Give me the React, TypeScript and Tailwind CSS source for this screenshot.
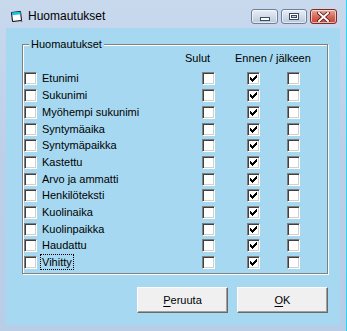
import React from "react";

const rows = [
  { label: "Etunimi", h: "h-[17px]" },
  { label: "Sukunimi", h: "h-[17px]" },
  { label: "Myöhempi sukunimi", h: "h-[17px]" },
  { label: "Syntymäaika", h: "h-[16px]" },
  { label: "Syntymäpaikka", h: "h-[17px]" },
  { label: "Kastettu", h: "h-[17px]" },
  { label: "Arvo ja ammatti", h: "h-[16px]" },
  { label: "Henkilöteksti", h: "h-[17px]" },
  { label: "Kuolinaika", h: "h-[17px]" },
  { label: "Kuolinpaikka", h: "h-[16px]" },
  { label: "Haudattu", h: "h-[17px]" },
  { label: "Vihitty", h: "h-[17px]", focused: true },
];

const CheckBox = ({ checked }: { checked?: boolean }) => (
  <div className="w-[13px] h-[13px] shrink-0 flex items-center justify-center bg-white border border-t-[#808080] border-l-[#808080] border-r-white border-b-white shadow-[inset_1px_1px_0_#404040,inset_-1px_-1px_0_#d4d0c8]">
    {checked && (
      <svg width="7" height="7" viewBox="0 0 7 7" shapeRendering="crispEdges">
        <path
          d="M0 2h1v3h-1z M1 3h1v3h-1z M2 4h1v3h-1z M3 3h1v3h-1z M4 2h1v3h-1z M5 1h1v3h-1z M6 0h1v3h-1z"
          fill="#000"
        />
      </svg>
    )}
  </div>
);

const CaptionButton = ({ kind }: { kind: "min" | "max" | "close" }) => {
  const base =
    kind === "close"
      ? "bg-gradient-to-b from-[#e9a99b] via-[#d46a5a] to-[#c2453a] border-[#7d2a22]"
      : "bg-gradient-to-b from-[#e8eef6] via-[#d2dcea] to-[#b9c8dc] border-[#6f7f97]";
  return (
    <div className={`h-[15px] ${kind === "max" ? "w-[26px]" : "w-[27px]"} rounded-[3px] border flex items-center justify-center shadow-[inset_0_0_0_1px_rgba(255,255,255,0.6)] ${base}`}>
      {kind === "min" && (
        <div className="w-[10px] h-[4px] mt-[4px] bg-white border border-[#3c4a5e]" />
      )}
      {kind === "max" && (
        <div className="w-[10px] h-[7px] border border-[#3c4a5e] bg-white flex items-center justify-center">
          <div className="w-[6px] h-[3px] bg-[#c6d3e4] border border-[#3c4a5e]" />
        </div>
      )}
      {kind === "close" && (
        <svg width="13" height="10" viewBox="0 0 13 10">
          <path d="M2 1 L11 9 M11 1 L2 9" stroke="#5b1b14" strokeWidth="3.6" strokeLinecap="square" />
          <path d="M2 1 L11 9 M11 1 L2 9" stroke="#fff" strokeWidth="2" strokeLinecap="square" />
        </svg>
      )}
    </div>
  );
};

const PushButton = ({ accel, rest }: { accel: string; rest: string }) => (
  <button className="w-[91px] h-[26px] flex items-center justify-center bg-[#f0f0f0] text-[11px] text-black border border-t-white border-l-white border-r-[#696969] border-b-[#696969] shadow-[inset_-1px_-1px_0_#a0a0a0]">
    <span>
      <span className="underline underline-offset-2">{accel}</span>
      {rest}
    </span>
  </button>
);

export default function App() {
  return (
    <div
      className="w-[347px] h-[331px] flex flex-col bg-gradient-to-b from-[#c8d9ee] via-[#bccfe8] to-[#b8cde8] border-r border-[#2ad6f2] text-black"
      style={{ fontFamily: '"Liberation Sans", Arial, sans-serif' }}
    >
      {/* Title bar */}
      <div className="h-[28px] shrink-0 flex items-start pl-[10px] pr-[9px]">
        <svg width="14" height="13" viewBox="0 0 14 13" className="mt-[10px]">
          <path d="M1.5 2.5 L10.5 1.5 L11.5 10.5 L2.5 11.5 Z" fill="#fff" stroke="#000" />
          <path d="M1.8 2.6 L10.4 1.7 L10.7 4.3 L2.1 5.2 Z" fill="#19c3e6" />
          <path d="M10 11 L13 11 L11.5 12.5 Z" fill="#8a8a8a" />
        </svg>
        <div className="ml-[4px] mt-[9px] text-[12px] leading-[14px]">Huomautukset</div>
        <div className="ml-auto mt-[9px] flex gap-[3px]">
          <CaptionButton kind="min" />
          <CaptionButton kind="max" />
          <CaptionButton kind="close" />
        </div>
      </div>

      {/* Client area */}
      <div className="mx-[6px] mb-[6px] flex-1 bg-[#a6d9f1] text-[11px] leading-[13px] flex flex-col">
        {/* Group box */}
        <div className="relative ml-[16px] mt-[16px] w-[306px] border border-[#808080] shadow-[inset_1px_1px_0_#fff,1px_1px_0_#fff] flex flex-col">
          <span className="absolute -top-[7px] left-[6px] px-[2px] bg-[#a6d9f1]">Huomautukset</span>

          <div className="h-[27px] pt-[7px] flex">
            <span className="ml-[162px] w-[50px]">Sulut</span>
            <span>Ennen / jälkeen</span>
          </div>

          {rows.map((r) => (
            <div key={r.label} className={`${r.h} flex items-start pl-[1px]`}>
              <CheckBox />
              <div className="ml-[5px] w-[160px]">
                <span className={r.focused ? "outline outline-1 outline-dotted outline-black outline-offset-[1px]" : ""}>
                  {r.label}
                </span>
              </div>
              <CheckBox />
              <div className="w-[32px]" />
              <CheckBox checked />
              <div className="w-[27px]" />
              <CheckBox />
            </div>
          ))}
        </div>

        {/* Buttons */}
        <div className="mt-[13px] w-[322px] ml-[0px] flex justify-end gap-[9px]">
          <PushButton accel="P" rest="eruuta" />
          <PushButton accel="O" rest="K" />
        </div>
      </div>
    </div>
  );
}
